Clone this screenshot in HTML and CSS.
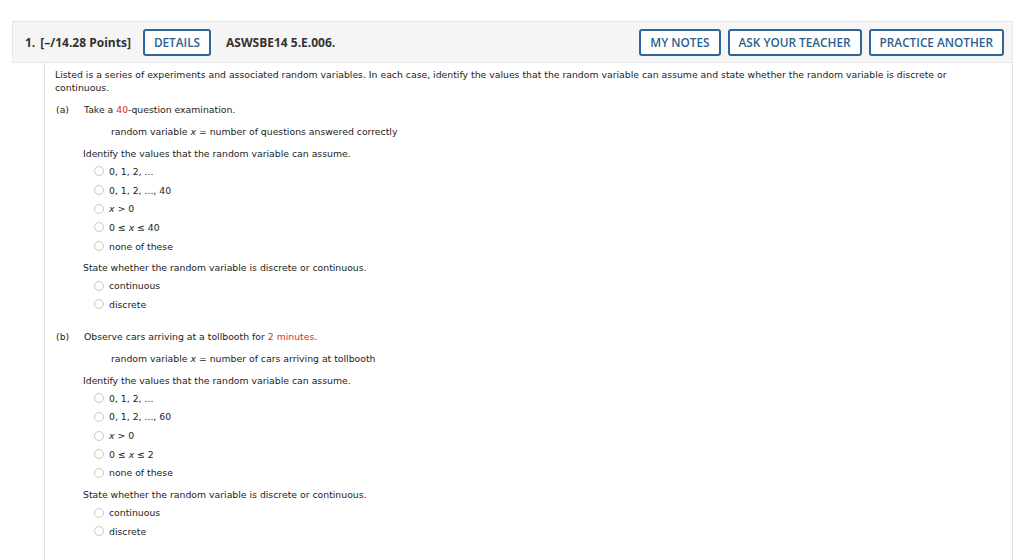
FILE: index.html
```html
<!DOCTYPE html>
<html>
<head>
<meta charset="utf-8">
<link rel="stylesheet" href="styles.css">
</head>
<body>
<div class="question">
  <div class="qhead">
    <span class="qnum">1.</span>
    <span class="points">[–/14.28 Points]</span>
    <button class="btn">DETAILS</button>
    <span class="code">ASWSBE14 5.E.006.</span>
    <div class="actions">
      <button class="btn">MY NOTES</button>
      <button class="btn">ASK YOUR TEACHER</button>
      <button class="btn">PRACTICE ANOTHER</button>
    </div>
  </div>
  <div class="qbody">
    <p class="intro">Listed is a series of experiments and associated random variables. In each case, identify the values that the random variable can assume and state whether the random variable is discrete or continuous.</p>

    <div class="part">
      <div class="part-title"><span class="label">(a)</span><span>Take a <span class="red">40</span>-question examination.</span></div>
      <div class="rv">random variable <i>x</i> = number of questions answered correctly</div>
      <div class="prompt">Identify the values that the random variable can assume.</div>
      <ul class="opts">
        <li><span class="radio"></span><span>0, 1, 2, ...</span></li>
        <li><span class="radio"></span><span>0, 1, 2, ..., 40</span></li>
        <li><span class="radio"></span><span><i>x</i> &gt; 0</span></li>
        <li><span class="radio"></span><span>0 ≤ <i>x</i> ≤ 40</span></li>
        <li><span class="radio"></span><span>none of these</span></li>
      </ul>
      <div class="prompt">State whether the random variable is discrete or continuous.</div>
      <ul class="opts">
        <li><span class="radio"></span><span>continuous</span></li>
        <li><span class="radio"></span><span>discrete</span></li>
      </ul>
    </div>

    <div class="part partb">
      <div class="part-title"><span class="label">(b)</span><span>Observe cars arriving at a tollbooth for <span class="red">2 minutes</span>.</span></div>
      <div class="rv">random variable <i>x</i> = number of cars arriving at tollbooth</div>
      <div class="prompt">Identify the values that the random variable can assume.</div>
      <ul class="opts">
        <li><span class="radio"></span><span>0, 1, 2, ...</span></li>
        <li><span class="radio"></span><span>0, 1, 2, ..., 60</span></li>
        <li><span class="radio"></span><span><i>x</i> &gt; 0</span></li>
        <li><span class="radio"></span><span>0 ≤ <i>x</i> ≤ 2</span></li>
        <li><span class="radio"></span><span>none of these</span></li>
      </ul>
      <div class="prompt">State whether the random variable is discrete or continuous.</div>
      <ul class="opts">
        <li><span class="radio"></span><span>continuous</span></li>
        <li><span class="radio"></span><span>discrete</span></li>
      </ul>
    </div>
  </div>
</div>
</body>
</html>
```
FILE: styles.css
```css
html, body {
  margin: 0;
  padding: 0;
  background: #ffffff;
}
.question {
  margin: 21px 11px 0 12px;
}
.qhead {
  display: flex;
  align-items: center;
  height: 40px;
  background: #f5f5f5;
  border: 1px solid #e6e6e6;
  padding: 0 8px 0 12px;
  font-family: "Open Sans", "Liberation Sans", sans-serif;
  font-size: 12px;
  font-weight: 700;
  color: #333;
}
.qnum {
  margin-right: 5px;
}
.points {
  margin-right: 12px;
}
.code {
  margin-left: 15px;
}
.btn {
  height: 27px;
  margin: 0;
  padding: 0 9px;
  background: #fff;
  border: 2px solid #2e6699;
  border-radius: 3px;
  color: #2c5f8f;
  font-family: "Open Sans", "Liberation Sans", sans-serif;
  font-size: 11.8px;
  font-weight: 600;
  cursor: pointer;
}
.actions {
  margin-left: auto;
  display: flex;
  gap: 7px;
}
.qbody {
  margin-left: 32px;
  border-left: 1px solid #dedede;
  border-right: 1px solid #dedede;
  padding: 5px 10px 30px 10px;
  font-family: "DejaVu Sans", Verdana, sans-serif;
  font-size: 9.3px;
  color: #222;
  line-height: 13px;
}
.intro {
  margin: 0;
}
.part {
  margin-top: 9px;
}
.partb {
  margin-top: 16px;
}
.part-title {
  display: flex;
}
.label {
  width: 28px;
  padding-left: 1px;
}
.red {
  color: #e4261c;
}
.rv {
  margin: 9px 0 0 56px;
}
.prompt {
  margin: 9px 0 0 28px;
}
.opts + .prompt {
  margin-top: 6px;
}
.opts {
  list-style: none;
  margin: 2px 0 0 39px;
  padding: 0;
}
.opts li {
  display: flex;
  align-items: center;
  height: 18.7px;
}
.radio {
  width: 8px;
  height: 8px;
  border: 1px solid #c8c8c8;
  border-radius: 50%;
  margin-right: 5px;
  background: #fff;
}
```
